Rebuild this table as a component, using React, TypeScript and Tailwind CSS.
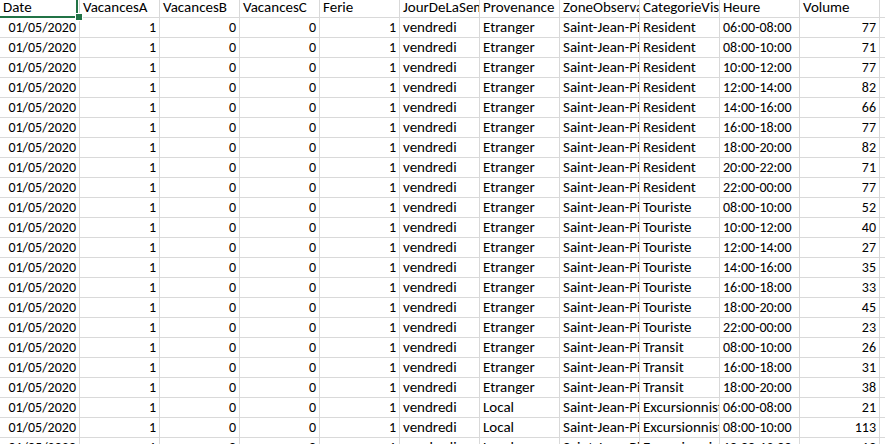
const headers = [
  "Date",
  "VacancesA",
  "VacancesB",
  "VacancesC",
  "Ferie",
  "JourDeLaSemaine",
  "Provenance",
  "ZoneObservation",
  "CategorieVisiteur",
  "Heure",
  "Volume",
  "",
];

// provenance, categorie, heure, volume
const rows: [string, string, string, number][] = [
  ["Etranger", "Resident", "06:00-08:00", 77],
  ["Etranger", "Resident", "08:00-10:00", 71],
  ["Etranger", "Resident", "10:00-12:00", 77],
  ["Etranger", "Resident", "12:00-14:00", 82],
  ["Etranger", "Resident", "14:00-16:00", 66],
  ["Etranger", "Resident", "16:00-18:00", 77],
  ["Etranger", "Resident", "18:00-20:00", 82],
  ["Etranger", "Resident", "20:00-22:00", 71],
  ["Etranger", "Resident", "22:00-00:00", 77],
  ["Etranger", "Touriste", "08:00-10:00", 52],
  ["Etranger", "Touriste", "10:00-12:00", 40],
  ["Etranger", "Touriste", "12:00-14:00", 27],
  ["Etranger", "Touriste", "14:00-16:00", 35],
  ["Etranger", "Touriste", "16:00-18:00", 33],
  ["Etranger", "Touriste", "18:00-20:00", 45],
  ["Etranger", "Touriste", "22:00-00:00", 23],
  ["Etranger", "Transit", "08:00-10:00", 26],
  ["Etranger", "Transit", "16:00-18:00", 31],
  ["Etranger", "Transit", "18:00-20:00", 38],
  ["Local", "Excursionniste", "06:00-08:00", 21],
  ["Local", "Excursionniste", "08:00-10:00", 113],
  ["Local", "Excursionniste", "10:00-12:00", 19],
];

function Cell({
  children,
  right,
  num,
}: {
  children?: React.ReactNode;
  right?: boolean;
  num?: boolean;
}) {
  return (
    <div
      className={`flex items-center overflow-hidden whitespace-nowrap border-r border-b border-[#d9d9d9] px-[3px] ${
        right ? "justify-end" : "justify-start"
      } ${num ? "text-[14px]" : ""}`}
    >
      <span className="shrink-0">{children}</span>
    </div>
  );
}

export default function App() {
  return (
    <div
      className="relative w-[885px] h-[444px] overflow-hidden bg-white text-[15px] text-black"
      style={{ fontFamily: "Carlito, Calibri, Lato, sans-serif" }}
    >
      <div className="grid grid-cols-[repeat(12,80px)] grid-rows-[18px] auto-rows-[20px] w-[960px]">
        {headers.map((h, i) => (
          <div
            key={i}
            className="flex items-center overflow-hidden whitespace-nowrap border-r border-b border-[#d9d9d9] px-[3px] pb-[2px]"
          >
            <span className="shrink-0">{h}</span>
          </div>
        ))}
        {rows.map((r, i) => (
          <div key={i} className="contents">
            <Cell right num>01/05/2020</Cell>
            <Cell right num>1</Cell>
            <Cell right num>0</Cell>
            <Cell right num>0</Cell>
            <Cell right num>1</Cell>
            <Cell>vendredi</Cell>
            <Cell>{r[0]}</Cell>
            <Cell>Saint-Jean-Pied-de-Port</Cell>
            <Cell>{r[1]}</Cell>
            <Cell num>{r[2]}</Cell>
            <Cell right num>{r[3]}</Cell>
            <Cell />
          </div>
        ))}
      </div>

      {/* active cell A1 */}
      <div className="absolute left-0 top-0 w-[78px] h-[18px] border-r-2 border-b-2 border-[#217346]" />
      <div className="absolute left-[75px] top-[13px] w-[8px] h-[8px] bg-[#217346] border border-white" />
    </div>
  );
}
